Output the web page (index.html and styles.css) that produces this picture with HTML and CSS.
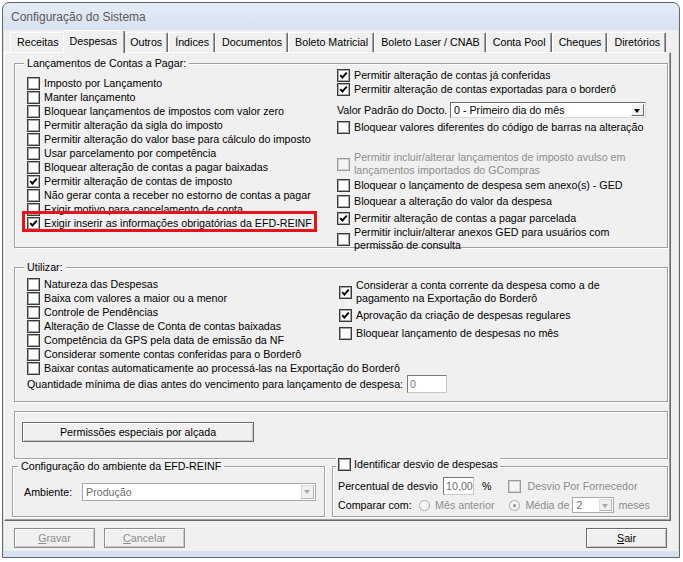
FILE: index.html
```html
<!DOCTYPE html>
<html lang="pt-BR">
<head>
  <meta charset="UTF-8">
  <title>Configuração do Sistema</title>
  <link rel="stylesheet" href="styles.css">
</head>
<body>
<div class="window">
  <div class="titlebar">Configuração do Sistema</div>

  <div class="client">
    <!-- abas -->
    <div class="tabs">
      <div class="tab">Receitas</div>
      <div class="tab active">Despesas</div>
      <div class="tab">Outros</div>
      <div class="tab">Índices</div>
      <div class="tab">Documentos</div>
      <div class="tab">Boleto Matricial</div>
      <div class="tab">Boleto Laser / CNAB</div>
      <div class="tab">Conta Pool</div>
      <div class="tab">Cheques</div>
      <div class="tab">Diretórios</div>
    </div>

    <div class="panel">
      <!-- Lançamentos de Contas a Pagar -->
      <div class="group g-lanc">
        <span class="caption">Lançamentos de Contas a Pagar:</span>
        <div class="cols">
          <div class="col-left">
            <div class="chk"><span class="box"></span>Imposto por Lançamento</div>
            <div class="chk"><span class="box"></span>Manter lançamento</div>
            <div class="chk"><span class="box"></span>Bloquear lançamentos de impostos com valor zero</div>
            <div class="chk"><span class="box"></span>Permitir alteração da sigla do imposto</div>
            <div class="chk"><span class="box"></span>Permitir alteração do valor base para cálculo do imposto</div>
            <div class="chk"><span class="box"></span>Usar parcelamento por competência</div>
            <div class="chk"><span class="box"></span>Bloquear alteração de contas a pagar baixadas</div>
            <div class="chk"><span class="box on"><svg viewBox="0 0 11 11"><path d="M2.2 5.2l2.2 2.3 4.4-4.8"/></svg></span>Permitir alteração de contas de imposto</div>
            <div class="chk"><span class="box"></span>Não gerar conta a receber no estorno de contas a pagar</div>
            <div class="chk"><span class="box"></span>Exigir motivo para cancelamento de conta</div>
            <div class="chk"><span class="box on"><svg viewBox="0 0 11 11"><path d="M2.2 5.2l2.2 2.3 4.4-4.8"/></svg></span>Exigir inserir as informações obrigatórias da EFD-REINF</div>
          </div>
          <div class="col-right">
            <div class="chk"><span class="box on"><svg viewBox="0 0 11 11"><path d="M2.2 5.2l2.2 2.3 4.4-4.8"/></svg></span>Permitir alteração de contas já conferidas</div>
            <div class="chk"><span class="box on"><svg viewBox="0 0 11 11"><path d="M2.2 5.2l2.2 2.3 4.4-4.8"/></svg></span>Permitir alteração de contas exportadas para o borderô</div>
            <div class="field doc-row">
              <span class="doc-label">Valor Padrão do Docto.</span>
              <div class="combo doc-combo"><span class="combo-text">0 - Primeiro dia do mês</span><span class="drop"></span></div>
            </div>
            <div class="chk mt2"><span class="box"></span>Bloquear valores diferentes do código de barras na alteração</div>
            <div class="chk multi disabled gcompras"><span class="box"></span><span>Permitir incluir/alterar lançamentos de imposto avulso em<br>lançamentos importados do GCompras</span></div>
            <div class="chk mt1"><span class="box"></span>Bloquear o lançamento de despesa sem anexo(s) - GED</div>
            <div class="chk mt2"><span class="box"></span>Bloquear a alteração do valor da despesa</div>
            <div class="chk mt3"><span class="box on"><svg viewBox="0 0 11 11"><path d="M2.2 5.2l2.2 2.3 4.4-4.8"/></svg></span>Permitir alteração de contas a pagar parcelada</div>
            <div class="chk multi mt1"><span class="box"></span><span>Permitir incluir/alterar anexos GED para usuários com<br>permissão de consulta</span></div>
          </div>
        </div>
        <div class="highlight"></div>
      </div>

      <!-- Utilizar -->
      <div class="group g-util">
        <span class="caption">Utilizar:</span>
        <div class="cols">
          <div class="col-left">
            <div class="chk"><span class="box"></span>Natureza das Despesas</div>
            <div class="chk"><span class="box"></span>Baixa com valores a maior ou a menor</div>
            <div class="chk"><span class="box"></span>Controle de Pendências</div>
            <div class="chk"><span class="box"></span>Alteração de Classe de Conta de contas baixadas</div>
            <div class="chk"><span class="box"></span>Competência da GPS pela data de emissão da NF</div>
            <div class="chk"><span class="box"></span>Considerar somente contas conferidas para o Borderô</div>
            <div class="chk"><span class="box"></span>Baixar contas automaticamente ao processá-las na Exportação do Borderô</div>
          </div>
          <div class="col-right">
            <div class="chk multi"><span class="box on"><svg viewBox="0 0 11 11"><path d="M2.2 5.2l2.2 2.3 4.4-4.8"/></svg></span><span>Considerar a conta corrente da despesa como a de<br>pagamento na Exportação do Borderô</span></div>
            <div class="chk mt3"><span class="box on"><svg viewBox="0 0 11 11"><path d="M2.2 5.2l2.2 2.3 4.4-4.8"/></svg></span>Aprovação da criação de despesas regulares</div>
            <div class="chk mt4"><span class="box"></span>Bloquear lançamento de despesas no mês</div>
          </div>
        </div>
        <div class="field qtd-row">
          <span>Quantidade mínima de dias antes do vencimento para lançamento de despesa:</span>
          <span class="edit qtd-edit">0</span>
        </div>
      </div>

      <!-- botão de permissões -->
      <div class="group g-perm">
        <div class="btn perm-btn">Permissões especiais por alçada</div>
      </div>

      <div class="bottom-row">
        <div class="group g-efd">
          <span class="caption">Configuração do ambiente da EFD-REINF</span>
          <div class="field">
            <span class="amb-label">Ambiente:</span>
            <div class="combo combo-off amb-combo"><span class="combo-text">Produção</span><span class="drop"></span></div>
          </div>
        </div>

        <div class="group g-desvio">
          <span class="caption caption-chk"><span class="box"></span>Identificar desvio de despesas</span>
          <div class="field">
            <span class="perc-label">Percentual de desvio</span>
            <span class="edit perc-edit">10,00</span>
            <span class="pct">%</span>
            <span class="chk disabled forn"><span class="box"></span>Desvio Por Fornecedor</span>
          </div>
          <div class="field cmp-row">
            <span class="cmp-label">Comparar com:</span>
            <span class="radio"></span><span class="off">Mês anterior</span>
            <span class="radio sel media-radio"></span><span class="off">Média de</span>
            <div class="combo combo-off meses-combo"><span class="combo-text">2</span><span class="drop"></span></div>
            <span class="off meses">meses</span>
          </div>
        </div>
      </div>
    </div>

    <div class="footer">
      <div class="btn btn-off"><span><u>G</u>ravar</span></div>
      <div class="btn btn-off"><span><u>C</u>ancelar</span></div>
      <div class="btn sair"><span><u>S</u>air</span></div>
    </div>
  </div>
</div>
</body>
</html>
```

FILE: styles.css
```css
body {
  margin: 0;
  padding: 2px 0 0 2px;
  background: #ffffff;
  font-family: "Liberation Sans", Arial, sans-serif;
  font-size: 10.7px;
  color: #000000;
}

/* janela */
.window {
  width: 678px;
  height: 556px;
  box-sizing: border-box;
  border: 1px solid #5e6670;
  border-radius: 7px 7px 0 0;
  background: linear-gradient(#e4ecf7, #d5e1f0 30px, #d5e1f0);
  display: flex;
  flex-direction: column;
}
.titlebar {
  height: 26px;
  line-height: 27px;
  padding: 1px 0 0 8px;
  font-size: 12px;
  color: #5a5a5a;
}
.client {
  flex: 1;
  margin: 0 1px 6px;
  background: #f0f0f0;
  display: flex;
  flex-direction: column;
}

/* abas */
.tabs {
  height: 22px;
  display: flex;
  align-items: flex-end;
  padding-left: 6px;
}
.tab {
  height: 20px;
  line-height: 19px;
  box-sizing: border-box;
  padding: 0 5px 0 6px;
  border-top: 1px solid #ffffff;
  border-left: 1px solid #ffffff;
  border-right: 1px solid #696969;
  box-shadow: inset -1px 0 0 #a0a0a0;
  border-radius: 2px 2px 0 0;
  white-space: nowrap;
}
.tab.active {
  height: 23px;
  line-height: 20px;
  margin: 0 -2px -1px;
  padding: 0 7px 0 6px;
  background: #f0f0f0;
  position: relative;
  z-index: 1;
}

.panel {
  height: 469px;
  box-sizing: border-box;
  margin-right: 7px;
  border: 1px solid;
  border-color: #ffffff #696969 #696969 #ffffff;
  box-shadow: inset -1px -1px 0 #a0a0a0;
  padding: 0 2px 0 9px;
}

/* grupos */
.group {
  position: relative;
  box-sizing: border-box;
  border: 1px solid #a0a0a0;
  box-shadow: inset 1px 1px 0 #ffffff, 1px 1px 0 #ffffff;
}
.caption {
  position: absolute;
  top: -7px;
  left: 9px;
  padding: 0 3px;
  line-height: 13px;
  background: #f0f0f0;
  white-space: nowrap;
}
.cols {
  display: grid;
}
.chk {
  display: flex;
  align-items: center;
  height: 14px;
  white-space: nowrap;
}
.chk .box {
  margin-right: 4px;
}
.chk.multi {
  height: 26px;
  line-height: 13px;
}
.chk.disabled {
  color: #8d8d8d;
}
.box {
  flex: none;
  width: 13px;
  height: 13px;
  box-sizing: border-box;
  border: 1px solid #3a3a3a;
  box-shadow: inset 0 0 0 1px #a8a8a8;
  background: #ffffff;
  display: inline-block;
}
.box svg {
  display: block;
  width: 11px;
  height: 11px;
  fill: none;
  stroke: #000000;
  stroke-width: 1.9;
}
.disabled .box {
  border-color: #9a9a9a;
  box-shadow: inset 0 0 0 1px #d4d4d4;
  background: #f4f4f4;
}
.mt1 { margin-top: 1px; }
.mt2 { margin-top: 2px; }
.mt3 { margin-top: 3px; }
.mt4 { margin-top: 4px; }

.g-lanc {
  margin-top: 10px;
  height: 185px;
}
.g-lanc .cols {
  grid-template-columns: 322px 1fr;
}
.g-lanc .col-left {
  padding: 12px 0 0 12px;
}
.g-lanc .col-right {
  padding-top: 4px;
}
.gcompras {
  margin-top: 17px;
}
.highlight {
  position: absolute;
  left: 7px;
  top: 147px;
  width: 295px;
  height: 21px;
  box-sizing: border-box;
  border: 3px solid #e8121a;
  pointer-events: none;
}

/* campos */
.field {
  display: flex;
  align-items: center;
  white-space: nowrap;
}
.doc-row {
  height: 16px;
  margin-top: 6px;
}
.doc-label {
  width: 113px;
}
.combo {
  box-sizing: border-box;
  height: 16px;
  border: 1px solid #6e6e6e;
  border-right-color: #d8d8d8;
  border-bottom-color: #d8d8d8;
  background: #ffffff;
  display: flex;
  align-items: center;
  padding: 1px 1px 1px 3px;
}
.combo-text {
  flex: 1;
}
.drop {
  flex: none;
  width: 13px;
  height: 100%;
  box-sizing: border-box;
  border: 1px solid;
  border-color: #ffffff #696969 #696969 #ffffff;
  background: #f0f0f0;
  position: relative;
}
.drop::after {
  content: "";
  position: absolute;
  left: 2px;
  top: 4px;
  border-left: 3.5px solid transparent;
  border-right: 3.5px solid transparent;
  border-top: 4px solid #000000;
}
.doc-combo {
  width: 196px;
}
.combo-off {
  border-color: #a9a9a9;
  color: #6d6d6d;
}
.combo-off .drop {
  border-color: #dcdcdc #b5b5b5 #b5b5b5 #dcdcdc;
}
.combo-off .drop::after {
  border-top-color: #a8a8a8;
}
.edit {
  box-sizing: border-box;
  height: 18px;
  line-height: 16px;
  border: 1px solid #7a7a7a;
  border-right-color: #c8c8c8;
  border-bottom-color: #c8c8c8;
  background: #ffffff;
  padding-left: 2px;
}

/* Utilizar */
.g-util {
  margin-top: 19px;
  height: 135px;
}
.g-util .cols {
  grid-template-columns: 324px 1fr;
}
.g-util .col-left {
  padding: 9px 0 0 12px;
}
.g-util .col-right {
  padding-top: 11px;
}
.qtd-row {
  height: 18px;
  padding-left: 12px;
}
.qtd-edit {
  width: 40px;
  margin-left: 4px;
  color: #7a7a9c;
}

/* Permissões */
.g-perm {
  margin-top: 9px;
  height: 48px;
  padding: 10px 0 0 7px;
}
.btn {
  box-sizing: border-box;
  height: 20px;
  border: 1px solid #6a6a6a;
  box-shadow: inset 1px 1px 0 #ffffff, inset -1px -1px 0 #c8c8c8;
  background: #f0f0f0;
  display: flex;
  align-items: center;
  justify-content: center;
}
.perm-btn {
  width: 232px;
}

/* linha inferior */
.bottom-row {
  display: flex;
  gap: 7px;
  margin: 7px 0 0 -2px;
}
.g-efd {
  width: 314px;
  height: 51px;
  padding: 16px 0 0 11px;
}
.g-efd .caption {
  left: 5px;
}
.amb-label {
  width: 58px;
}
.amb-combo {
  width: 234px;
  height: 18px;
}
.g-desvio {
  width: 337px;
  height: 51px;
  padding: 10px 0 0 5px;
}
.caption-chk {
  top: -9px;
  left: 3px;
  padding: 0 2px;
  display: flex;
  align-items: center;
}
.caption-chk .box {
  margin-right: 3px;
}
.perc-label {
  width: 105px;
}
.g-desvio .field {
  height: 18px;
}
.perc-edit {
  width: 31px;
  color: #6d6d6d;
}
.pct {
  margin-left: 8px;
}
.forn {
  margin-left: 16px;
}
.forn .box {
  margin-right: 7px;
}
.off {
  color: #8d8d8d;
}
.g-desvio .cmp-row {
  height: 16px;
  margin-top: 2px;
}
.cmp-label {
  width: 81px;
}
.radio {
  flex: none;
  width: 11px;
  height: 11px;
  box-sizing: border-box;
  border-radius: 50%;
  border: 1px solid #a8a8a8;
  background: #f6f6f6;
  margin-right: 5px;
  position: relative;
}
.radio.sel::after {
  content: "";
  position: absolute;
  left: 3px;
  top: 3px;
  width: 3px;
  height: 3px;
  border-radius: 50%;
  background: #8a8a8a;
}
.media-radio {
  margin-left: 15px;
}
.meses-combo {
  width: 42px;
  margin-left: 3px;
}
.meses {
  margin-left: 4px;
}

/* rodapé */
.footer {
  flex: 1;
  display: flex;
  gap: 9px;
  padding: 7px 11px 0 10px;
}
.footer .btn {
  width: 81px;
}
.btn-off {
  color: #8d8d8d;
  border-color: #8e8e8e;
}
.sair {
  margin-left: auto;
}
```
